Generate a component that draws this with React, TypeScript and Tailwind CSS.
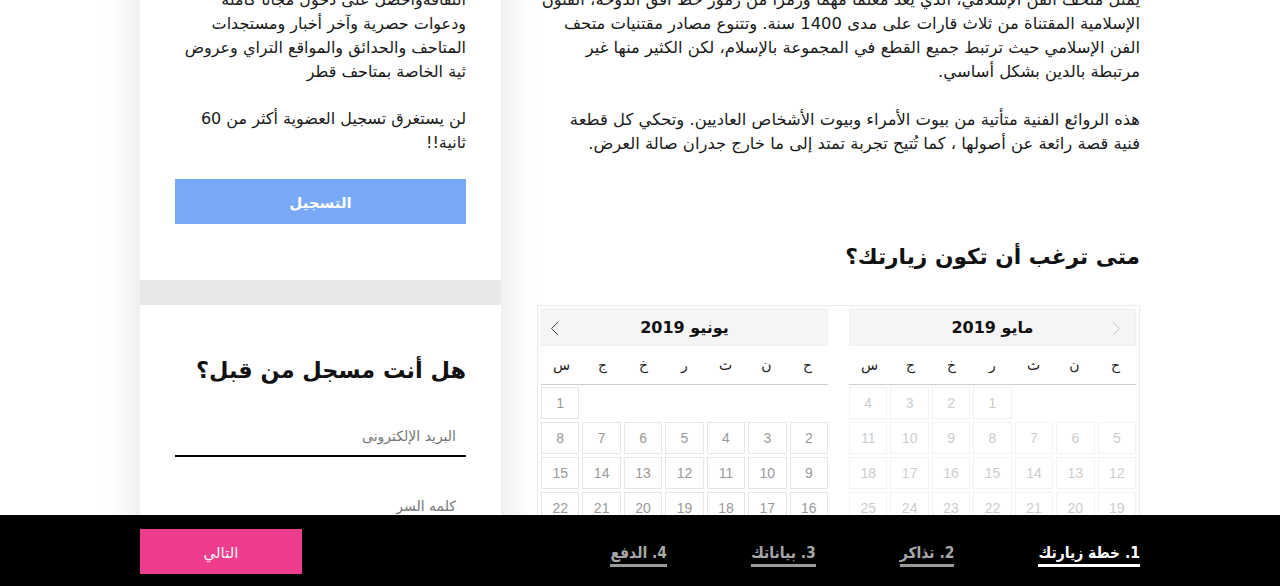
import React from 'react';

const days = ['ح', 'ن', 'ث', 'ر', 'خ', 'ج', 'س'];

function Month({ title, offset, count, disabled, arrow }: { title: string; offset: number; count: number; disabled?: boolean; arrow: 'prev' | 'next' }) {
  const cells: (number | null)[] = [];
  for (let i = 0; i < offset; i++) cells.push(null);
  for (let d = 1; d <= count; d++) cells.push(d);

  return (
    <div className="w-[287px]">
      <div className="relative flex h-[37px] items-center justify-center border border-[#efefef] bg-[#f5f5f5]">
        <span className="text-[16px] font-bold text-[#111]">{title}</span>
        {arrow === 'prev' ? (
          <svg className="absolute right-[14px] top-[11px]" width="9" height="15" viewBox="0 0 9 15" fill="none">
            <path d="M1 1l6.5 6.5L1 14" stroke="#c8c8c8" strokeWidth="1" />
          </svg>
        ) : (
          <svg className="absolute left-[8px] top-[11px]" width="9" height="15" viewBox="0 0 9 15" fill="none">
            <path d="M8 1L1.5 7.5 8 14" stroke="#444" strokeWidth="1" />
          </svg>
        )}
      </div>
      <div className="grid h-[39px] grid-cols-7 items-center border-b border-[#cfcfcf] text-center text-[14px] text-[#222]">
        {days.map((d) => (
          <span key={d}>{d}</span>
        ))}
      </div>
      <div className="mt-[2px] grid grid-cols-7 gap-[3px] font-['Liberation_Sans',sans-serif]">
        {cells.map((c, i) =>
          c === null ? (
            <div key={i} className="h-[32px]" />
          ) : (
            <div
              key={i}
              className={
                disabled
                  ? 'flex h-[32px] items-center justify-center border border-[#f2f2f2] text-[14px] text-[#cdcdcd]'
                  : 'flex h-[32px] items-center justify-center border border-[#e6e6e6] text-[14px] text-[#9a9a9a]'
              }
            >
              {c}
            </div>
          ),
        )}
      </div>
    </div>
  );
}

export default function App() {
  return (
    <div dir="rtl" className="flex h-[586px] flex-col overflow-hidden bg-white font-['DejaVu_Sans',sans-serif] text-[#1a1a1a]">
      <div className="flex-1 overflow-hidden">
        <div className="mx-auto -mt-[52px] flex w-[1000px] justify-between">
          {/* Main content */}
          <div className="w-[603px] pt-[40px]">
            <div className="text-[16.4px] leading-[24px] text-[#1a1a1a]">
              <p>
                يمثل متحف الفن الإسلامي، الذي يعد معلما مهما ورمزا من رموز خط أفق الدوحة، الفنون
                <br />
                الإسلامية المقتناة من ثلاث قارات على مدى 1400 سنة. وتتنوع مصادر مقتنيات متحف
                <br />
                الفن الإسلامي حيث ترتبط جميع القطع في المجموعة بالإسلام، لكن الكثير منها غير
                <br />
                مرتبطة بالدين بشكل أساسي.
              </p>
              <p className="mt-[24px]">
                هذه الروائع الفنية متأتية من بيوت الأمراء وبيوت الأشخاص العاديين. وتحكي كل قطعة
                <br />
                فنية قصة رائعة عن أصولها ، كما تُتيح تجربة تمتد إلى ما خارج جدران صالة العرض.
              </p>
            </div>
            <h2 className="mt-[83px] text-[21.7px] font-bold leading-[36px] text-[#111]">متى ترغب أن تكون زيارتك؟</h2>
            <div className="mt-[30px] flex justify-between border border-[#ececec] p-[3px]">
              <Month title="مايو 2019" offset={3} count={31} disabled arrow="prev" />
              <Month title="يونيو 2019" offset={6} count={30} arrow="next" />
            </div>
          </div>

          {/* Sidebar */}
          <div className="w-[361px] bg-[#e8e8e8] shadow-[0_0_40px_rgba(0,0,0,0.12)]">
            <div className="bg-white px-[35px] pb-[56px] pt-[40px]">
              <div className="text-[16px] leading-[24px] text-[#1a1a1a]">
                <p>
                  الثقافةواحصل على دخول مجانا كاملة
                  <br />
                  ودعوات حصرية وآخر أخبار ومستجدات
                  <br />
                  المتاحف والحدائق والمواقع التراي وعروض
                  <br />
                  ثية الخاصة بمتاحف قطر
                </p>
                <p className="mt-[23px]">
                  لن يستغرق تسجيل العضوية أكثر من 60
                  <br />
                  ثانية!!
                </p>
              </div>
              <button className="mt-[24px] h-[45px] w-full pt-[3px] bg-[#78a8f6] text-[15px] font-bold text-white">التسجيل</button>
            </div>
            <div className="mt-[25px] bg-white px-[35px] pb-[40px] pt-[45px]">
              <h3 className="whitespace-nowrap text-[22.4px] font-bold leading-[40px] text-[#111]">هل أنت مسجل من قبل؟</h3>
              <div className="mt-[27px] flex h-[40px] items-center border-b-2 border-black px-[10px] text-[14px] text-[#777]">البريد الإلكترونى</div>
              <div className="mt-[30px] flex h-[40px] items-center border-b-2 border-black px-[10px] text-[14px] text-[#777]">كلمه السر</div>
            </div>
          </div>
        </div>
      </div>

      {/* Footer steps */}
      <div className="h-[71px] shrink-0 bg-black">
        <div className="mx-auto flex h-full w-[1000px] items-center justify-between">
          <div className="flex items-center gap-[84px] pt-[8px] font-['DejaVu_Sans_Condensed',sans-serif] text-[15.5px] font-bold leading-[22px]">
            <span className="border-b-[3px] border-white text-white">1. خطة زيارتك</span>
            <span className="border-b-[3px] border-[#9a9a9a] text-[#a8a8a8]">2. تذاكر</span>
            <span className="border-b-[3px] border-[#9a9a9a] text-[#a8a8a8]">3. بياناتك</span>
            <span className="border-b-[3px] border-[#9a9a9a] text-[#a8a8a8]">4. الدفع</span>
          </div>
          <button className="mt-[2px] h-[45px] w-[162px] pt-[4px] bg-[#ee3d8c] text-[15px] text-[#f4f4f4]">التالي</button>
        </div>
      </div>
    </div>
  );
}
